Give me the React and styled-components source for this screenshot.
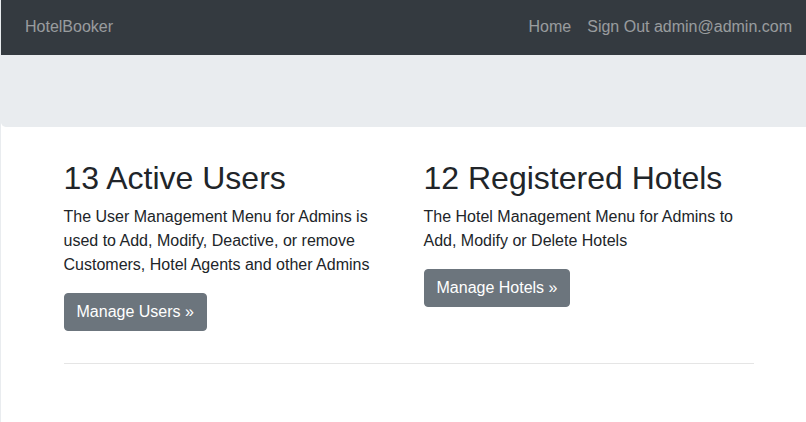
import React from 'react';
import styled, { createGlobalStyle } from 'styled-components';

const palette = {
  dark: '#343a40',
  light: '#e9ecef',
  text: '#212529',
  secondary: '#6c757d',
};

const GlobalStyle = createGlobalStyle`
  body {
    margin: 0;
    background: #fff;
    overflow: hidden;
    font-family: "Liberation Sans", Arial, sans-serif;
    font-size: 16px;
    line-height: 1.5;
    color: ${palette.text};
  }
`;

const Page = styled.div`
  width: 815px;
  min-height: 422px;
  border-left: 1px solid ${palette.light};
`;

const Navbar = styled.nav`
  box-sizing: border-box;
  height: 55px;
  padding: 15px 16px 0 24px;
  background: ${palette.dark};
  display: flex;
  align-items: flex-start;
  justify-content: space-between;
`;

const Brand = styled.a`
  color: rgba(255, 255, 255, 0.5);
  text-decoration: none;
  font-size: 16px;
  line-height: 24px;
`;

const NavList = styled.div`
  display: flex;
`;

const NavLink = styled.a`
  color: rgba(255, 255, 255, 0.5);
  text-decoration: none;
  padding: 0 8px;
  line-height: 24px;
  white-space: nowrap;
`;

const Jumbotron = styled.div`
  height: 71.7px;
  background: ${palette.light};
  border-radius: 0 0 0 4.8px;
  margin-bottom: 32px;
`;

const Container = styled.div`
  box-sizing: border-box;
  width: 720px;
  margin: 0 auto;
  padding: 0 15px;
`;

const Row = styled.div`
  display: grid;
  grid-template-columns: 1fr 1fr;
  margin: 0 -15px;
`;

const Col = styled.div`
  padding: 0 15px;
`;

const Heading = styled.h2`
  margin: 0 0 8px;
  font-size: 32px;
  font-weight: 500;
  line-height: 1.2;
`;

const Text = styled.p`
  margin: 0 0 16px;
`;

const Button = styled.a`
  display: inline-block;
  padding: 6px 12px;
  border: 1px solid ${palette.secondary};
  border-radius: 4px;
  background: ${palette.secondary};
  color: #fff;
  text-decoration: none;
  line-height: 24px;
`;

const Divider = styled.hr`
  margin: 16px 0 0;
  border: 0;
  border-top: 1px solid rgba(0, 0, 0, 0.1);
`;

const cards = [
  {
    title: '13 Active Users',
    text: 'The User Management Menu for Admins is used to Add, Modify, Deactive, or remove Customers, Hotel Agents and other Admins',
    action: 'Manage Users »',
  },
  {
    title: '12 Registered Hotels',
    text: 'The Hotel Management Menu for Admins to Add, Modify or Delete Hotels',
    action: 'Manage Hotels »',
  },
];

const App = () => {
  return (
    <Page>
      <GlobalStyle />
      <Navbar>
        <Brand href="#">HotelBooker</Brand>
        <NavList>
          <NavLink href="#">Home</NavLink>
          <NavLink href="#">Sign Out admin@admin.com</NavLink>
        </NavList>
      </Navbar>
      <Jumbotron />
      <Container>
        <Row>
          {cards.map((c) => (
            <Col key={c.title}>
              <Heading>{c.title}</Heading>
              <Text>{c.text}</Text>
              <Text>
                <Button href="#">{c.action}</Button>
              </Text>
            </Col>
          ))}
        </Row>
        <Divider />
      </Container>
    </Page>
  );
};

export default App;
